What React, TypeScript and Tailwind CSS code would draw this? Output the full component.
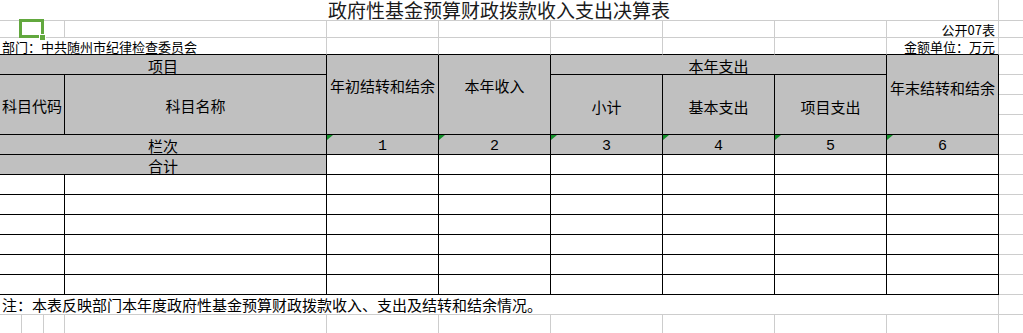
import React from "react";

const CS = ["", "col-start-1", "col-start-2", "col-start-3", "col-start-4", "col-start-5", "col-start-6", "col-start-7", "col-start-8", "col-start-9", "col-start-10", "col-start-11"];
const CSP = ["", "col-span-1", "col-span-2", "col-span-3", "col-span-4", "col-span-5", "col-span-6", "col-span-7", "col-span-8", "col-span-9", "col-span-10"];
const RS = ["", "row-start-1", "row-start-2", "row-start-3", "row-start-4", "row-start-5", "row-start-6", "row-start-7", "row-start-8", "row-start-9", "row-start-10", "row-start-11", "row-start-12", "row-start-13", "row-start-14", "row-start-15", "row-start-16", "row-start-17"];
const RSP = ["", "row-span-1", "row-span-2", "row-span-3", "row-span-4"];

type B = "g" | "b" | "n";
const RB: Record<B, string> = { g: "border-r border-r-[#cdcdcd]", b: "border-r border-r-black", n: "" };
const BB: Record<B, string> = { g: "border-b border-b-[#cdcdcd]", b: "border-b border-b-black", n: "" };

function Cell({
  c, r, cs = 1, rs = 1, right = "g", bottom = "g", gray = false, className = "", children,
}: {
  c: number; r: number; cs?: number; rs?: number; right?: B; bottom?: B; gray?: boolean; className?: string; children?: React.ReactNode;
}) {
  return (
    <div
      className={[
        "relative min-w-0 min-h-0",
        CS[c], CSP[cs], RS[r], RSP[rs], RB[right], BB[bottom],
        gray ? "bg-[#c0c0c0]" : "",
        className,
      ].join(" ")}
    >
      {children}
    </div>
  );
}

function Tri() {
  return (
    <svg className="absolute left-0 top-0" width="6" height="5" viewBox="0 0 6 5">
      <polygon points="0,0 6,0 0,5" fill="#12902a" />
    </svg>
  );
}

const H = "flex items-center justify-center text-[15px] leading-none text-black whitespace-nowrap";

export default function App() {
  const cols = [5, 6, 7, 8, 9, 10];
  const dataRows = [10, 11, 12, 13, 14, 15];
  return (
    <div className="relative w-[1023px] h-[333px] overflow-hidden bg-white font-['Noto_Sans_CJK_SC',sans-serif] text-black">
      <div className="grid grid-cols-[22px_22px_21px_262px_repeat(6,112px)_24px] grid-rows-[21px_17px_17px_repeat(14,20px)]">
        {/* Row 1: title */}
        <Cell c={1} r={1} cs={10} className="flex items-start justify-center text-[19px] leading-[20px] text-[#1a1a1a] whitespace-nowrap">
          政府性基金预算财政拨款收入支出决算表
        </Cell>
        <Cell c={11} r={1} right="n" />

        {/* Row 2 */}
        <Cell c={1} r={2} />
        <Cell c={2} r={2} />
        <Cell c={3} r={2} />
        <Cell c={4} r={2} />
        {[5, 6, 7, 8, 9].map((c) => (
          <Cell key={c} c={c} r={2} />
        ))}
        <Cell c={10} r={2} className="flex items-end justify-end pr-[3px] text-[13px] leading-none whitespace-nowrap">
          <span className="pb-[1px]">公开07表</span>
        </Cell>
        <Cell c={11} r={2} right="n" />

        {/* Row 3 */}
        <Cell c={1} r={3} cs={4} bottom="b" className="flex items-end pl-[2px] text-[13px] leading-none whitespace-nowrap">
          <span className="pb-[1px]">部门：中共随州市纪律检查委员会</span>
        </Cell>
        {[5, 6, 7, 8, 9].map((c) => (
          <Cell key={c} c={c} r={3} bottom="b" />
        ))}
        <Cell c={10} r={3} bottom="b" className="flex items-end justify-end pr-[3px] text-[13px] leading-none whitespace-nowrap">
          <span className="pb-[1px]">金额单位：万元</span>
        </Cell>
        <Cell c={11} r={3} right="n" />

        {/* Header */}
        <Cell c={1} r={4} cs={4} right="b" bottom="b" gray className={H}>
          <span className="pt-[2px]">项目</span>
        </Cell>
        <Cell c={5} r={4} rs={4} right="b" bottom="b" gray className={H}>
          <span className="pb-[18px]">年初结转和结余</span>
        </Cell>
        <Cell c={6} r={4} rs={4} right="b" bottom="b" gray className={H}>
          <span className="pb-[18px]">本年收入</span>
        </Cell>
        <Cell c={7} r={4} cs={3} right="b" bottom="b" gray className={H}>
          <span className="pt-[2px]">本年支出</span>
        </Cell>
        <Cell c={10} r={4} rs={4} right="b" bottom="b" gray className={H}>
          <span className="pb-[14px]">年末结转和结余</span>
        </Cell>
        <Cell c={11} r={4} right="n" />

        <Cell c={1} r={5} cs={3} rs={3} right="b" bottom="b" gray className={H}>
          <span className="pt-[2px]">科目代码</span>
        </Cell>
        <Cell c={4} r={5} rs={3} right="b" bottom="b" gray className={H}>
          <span className="pt-[2px]">科目名称</span>
        </Cell>
        <Cell c={7} r={5} rs={3} right="b" bottom="b" gray className={H}>
          <span className="pt-[4px]">小计</span>
        </Cell>
        <Cell c={8} r={5} rs={3} right="b" bottom="b" gray className={H}>
          <span className="pt-[4px]">基本支出</span>
        </Cell>
        <Cell c={9} r={5} rs={3} right="b" bottom="b" gray className={H}>
          <span className="pt-[4px]">项目支出</span>
        </Cell>
        <Cell c={11} r={5} right="n" />
        <Cell c={11} r={6} right="n" />
        <Cell c={11} r={7} right="n" />

        {/* Row 8: 栏次 */}
        <Cell c={1} r={8} cs={4} right="b" bottom="b" gray className={H}>
          <span className="pt-[2px]">栏次</span>
        </Cell>
        {cols.map((c, i) => (
          <Cell key={c} c={c} r={8} right="b" bottom="b" gray className={H}>
            <Tri />
            <span className="pt-[4px] font-['Liberation_Mono',monospace] text-[15px]">{i + 1}</span>
          </Cell>
        ))}
        <Cell c={11} r={8} right="n" />

        {/* Row 9: 合计 */}
        <Cell c={1} r={9} cs={4} right="b" bottom="b" gray className={H}>
          <span className="pt-[2px]">合计</span>
        </Cell>
        {cols.map((c) => (
          <Cell key={c} c={c} r={9} right="b" bottom="b" />
        ))}
        <Cell c={11} r={9} right="n" />

        {/* Data rows */}
        {dataRows.map((r) => (
          <React.Fragment key={r}>
            <Cell c={1} r={r} cs={3} right="b" bottom="b" />
            <Cell c={4} r={r} right="b" bottom="b" />
            {cols.map((c) => (
              <Cell key={c} c={c} r={r} right="b" bottom="b" />
            ))}
            <Cell c={11} r={r} right="n" />
          </React.Fragment>
        ))}

        {/* Row 16: note */}
        <Cell c={1} r={16} cs={10} className="flex items-end pl-[2px] text-[15px] leading-none whitespace-nowrap">
          <span className="pb-[2px]">注：本表反映部门本年度政府性基金预算财政拨款收入、支出及结转和结余情况。</span>
        </Cell>
        <Cell c={11} r={16} right="n" />

        {/* Row 17 */}
        {[1, 2, 3, 4, 5, 6, 7, 8, 9, 10].map((c) => (
          <Cell key={c} c={c} r={17} />
        ))}
        <Cell c={11} r={17} right="n" />
      </div>

      {/* selection box overlay */}
      <div className="absolute left-[19px] top-[19px] w-[25px] h-[19px] border-[3px] border-[#62a83e]" />
      <div className="absolute left-[39px] top-[34px] w-[7px] h-[7px] bg-[#62a83e] border border-white" />
    </div>
  );
}
